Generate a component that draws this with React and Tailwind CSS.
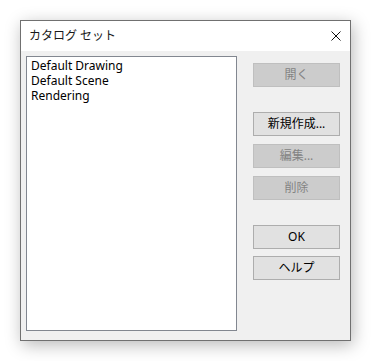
import React from "react";

/* ───────────────── Button ───────────────── */
function DlgButton({ label, disabled, className = "" }) {
  return (
    <div
      className={`w-[87px] h-[24px] flex items-center justify-center border text-[12px] leading-none ${
        disabled
          ? "bg-[#cccccc] border-[#bfbfbf] text-[#838383]"
          : "bg-[#e1e1e1] border-[#adadad] text-black"
      } ${className}`}
    >
      {label}
    </div>
  );
}

/* ───────────────── Dialog ───────────────── */
export default function App() {
  return (
    <div
      className="w-[371px] h-[361px] bg-white pt-[20px] pl-[20px]"
      style={{ fontFamily: '"Noto Sans", "Noto Sans CJK JP", sans-serif' }}
    >
      <div className="w-[331px] h-[321px] border border-[#707070] bg-[#f0f0f0] flex flex-col shadow-[2px_4px_16px_rgba(0,0,0,0.28)]">
        {/* Title bar */}
        <div className="h-[30px] bg-white flex items-center justify-between pl-[8px] pr-[9px]">
          <span className="text-[12px] text-[#1a1a1a]">カタログ セット</span>
          <svg width="10" height="10" viewBox="0 0 10 10" className="mt-[0px]">
            <path d="M0.5 0.5 L9.5 9.5 M9.5 0.5 L0.5 9.5" stroke="#111" strokeWidth="1" />
          </svg>
        </div>

        {/* Body */}
        <div className="flex-1 flex pl-[5px] pt-[5px]">
          <div className="w-[211px] h-[275px] bg-white border border-[#828790] px-[4px] pt-[1px] text-[12px] leading-[15px] text-black">
            <div>Default Drawing</div>
            <div>Default Scene</div>
            <div>Rendering</div>
          </div>

          <div className="ml-[16px] pt-[7px] flex flex-col">
            <DlgButton label="開く" disabled />
            <DlgButton label="新規作成..." className="mt-[25px]" />
            <DlgButton label="編集..." disabled className="mt-[8px]" />
            <DlgButton label="削除" disabled className="mt-[8px]" />
            <DlgButton label="OK" className="mt-[25px]" />
            <DlgButton label="ヘルプ" className="mt-[7px]" />
          </div>
        </div>
      </div>
    </div>
  );
}
